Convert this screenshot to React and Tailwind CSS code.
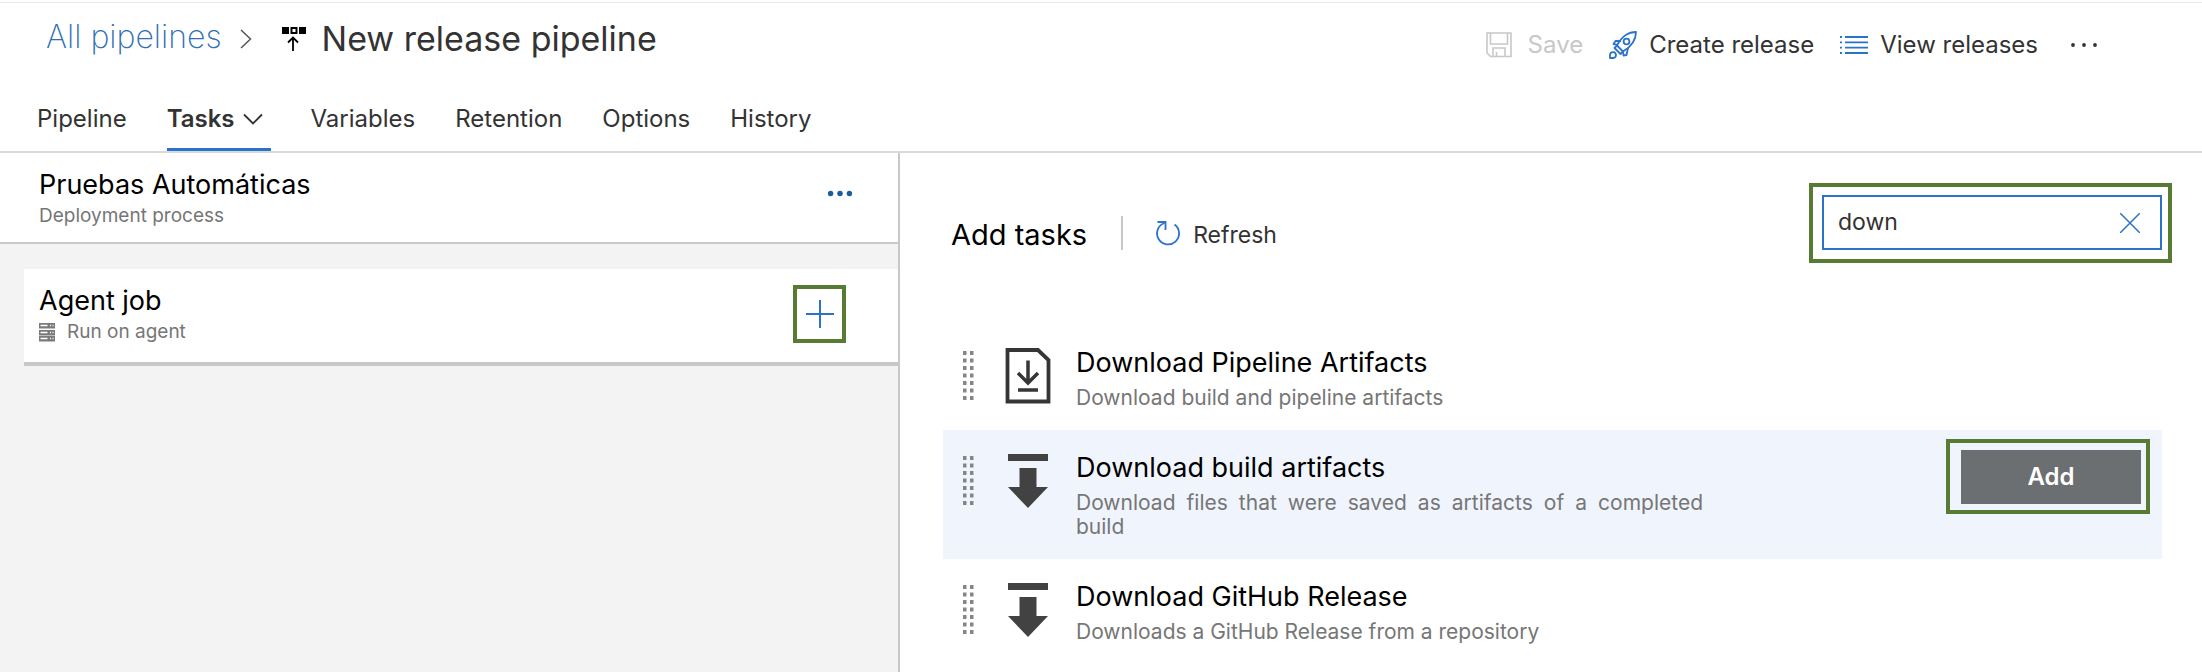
import React from 'react';

const blue = '#2b73c9';

function ChevronRight() {
  return (
    <svg className="h-5 w-3" viewBox="0 0 12 20" fill="none" stroke="#555" strokeWidth="1.5" aria-hidden="true">
      <path d="M1 1l9.500 9L1 19" />
    </svg>
  );
}

function PipelineIcon() {
  return (
    <svg className="h-6 w-6" viewBox="0 0 24 24" aria-hidden="true">
      <path d="M0 0h7v7H0zM17 0h7v7h-7z" fill="#000" />
      <path d="M9.500 1h5v5h-5z" fill="#fff" stroke="#000" strokeWidth="2" />
      <path d="M11 24V11M6 15.500l5-5 5 5" fill="none" stroke="#000" strokeWidth="1.800" />
    </svg>
  );
}

function SaveIcon() {
  return (
    <svg className="h-[26px] w-[26px]" viewBox="0 0 26 26" fill="none" stroke="#c8c8c8" strokeWidth="1.600" aria-hidden="true">
      <path d="M1 1h24v23.500H4.500L1 21z" />
      <path d="M4.500 1v11h17V1M7 24.500V16h12v8.500M10.500 24.500V20" />
    </svg>
  );
}

function RocketIcon() {
  return (
    <svg className="h-7 w-7" viewBox="0 0 28 28" fill="none" stroke={blue} strokeWidth="1.800" strokeLinejoin="round" aria-hidden="true">
      <path d="M27 1C19 1 13.500 4.500 8 14.500l6 6C22.500 15.500 27 10 27 1z" />
      <circle cx="17.500" cy="10.500" r="2.900" />
      <path d="M12 10H6.500L4.500 13l4 .8M19 17l-1.500 7-3 .5-.5-4" />
      <path d="M8 14.500l-2.500 2.500 6 6 2.500-2.500" />
      <path d="M1 27v-3.500a3 3 0 1 1 3.500 3.500z" />
    </svg>
  );
}

function ListIcon() {
  return (
    <svg className="h-5 w-7" viewBox="0 0 28 20" stroke={blue} strokeWidth="1.800" aria-hidden="true">
      <path d="M5 2h23M5 7.300h23M5 12.700h23M5 18h23M0 2h2M0 7.300h2M0 12.700h2M0 18h2" />
    </svg>
  );
}

function Dots({ className, r, color }) {
  return (
    <svg className={className} viewBox="0 0 28 8" fill={color} aria-hidden="true">
      <circle cx="3" cy="4" r={r} />
      <circle cx="14" cy="4" r={r} />
      <circle cx="25" cy="4" r={r} />
    </svg>
  );
}

function ServerIcon() {
  return (
    <svg className="h-[19px] w-4" viewBox="0 0 16 19" aria-hidden="true">
      {[0, 7, 13].map((y) => (
        <g key={y}>
          <path d={`M0 ${y}h16v5.500H0z`} fill="#7a7a7a" />
          <path d={`M1.500 ${y + 2.5}h7M11 ${y + 2.5}h1M13.500 ${y + 2.5}h1`} stroke="#fff" strokeWidth="1.300" />
        </g>
      ))}
    </svg>
  );
}

function RefreshIcon() {
  return (
    <svg className="h-[26px] w-[26px]" viewBox="0 0 26 26" fill="none" stroke={blue} strokeWidth="1.800" aria-hidden="true">
      <path d="M19.500 4.500A11 11 0 1 1 9.500 3" />
      <path d="M2.500 2h8v8" />
    </svg>
  );
}

function DragHandle() {
  return (
    <svg className="mt-[26px] h-[50px] w-[11px] shrink-0" viewBox="0 0 11 50" fill="#858585" aria-hidden="true">
      {[0, 1, 2, 3, 4, 5, 6].map((i) => (
        <path key={i} d={`M0 ${i * 7.5}h3.500v4h-3.500zM7 ${i * 7.5}h3.500v4h-3.500z`} />
      ))}
    </svg>
  );
}

function FileDownloadIcon() {
  return (
    <svg className="h-14 w-12" viewBox="0 0 48 56" fill="none" stroke="#363636" aria-hidden="true">
      <path d="M3.500 2h30.500l10.500 10v41.500h-41z" strokeWidth="3.800" />
      <path d="M24 12.500v22M14 25l10 10 10-10M14 42h20" strokeWidth="3.500" />
    </svg>
  );
}

function ArrowDownloadIcon() {
  return (
    <svg className="h-14 w-12" viewBox="0 0 48 56" fill="#424242" aria-hidden="true">
      <path d="M4 1h40v7H4zM15.500 15h17v19H44L24 55 4 34h11.500z" />
    </svg>
  );
}

const tabs = ['Variables', 'Retention', 'Options', 'History'];

const tasks = [
  { name: 'Download Pipeline Artifacts', text: 'Download build and pipeline artifacts', Icon: FileDownloadIcon },
  {
    name: 'Download build artifacts',
    text: 'Download files that were saved as artifacts of a completed build',
    Icon: ArrowDownloadIcon,
    selected: true,
  },
  { name: 'Download GitHub Release', text: 'Downloads a GitHub Release from a repository', Icon: ArrowDownloadIcon },
];

function Header() {
  return (
    <header className="border-b-2 border-[#d9d9d9] pt-0.5">
      <div className="flex h-[87px] items-start justify-between border-t border-[#e8e8e8] pr-[102px] pl-[46px]">
        <div className="flex h-[72px] items-center">
          <a href="#pipelines" className="pb-1 text-[32px] leading-10 font-extralight text-[#2f6fb5]">
            All pipelines
          </a>
          <span className="ml-[18px]"><ChevronRight /></span>
          <span className="ml-[30px]"><PipelineIcon /></span>
          <h1 className="ml-4 text-[34px] leading-10 text-[#333]">New release pipeline</h1>
        </div>
        <div className="flex h-[84px] items-center text-2xl text-[#333]">
          <button type="button" disabled className="flex items-center gap-4 text-[#c8c8c8]">
            <SaveIcon />
            Save
          </button>
          <button type="button" className="ml-[26px] flex items-center gap-3">
            <RocketIcon />
            Create release
          </button>
          <button type="button" className="ml-[26px] flex items-center gap-3">
            <ListIcon />
            View releases
          </button>
          <button type="button" aria-label="More actions" className="ml-[30px]">
            <Dots className="h-2 w-8" r="1.9" color="#333" />
          </button>
        </div>
      </div>
      <nav className="flex h-[62px] gap-10 pl-[37px] text-2xl leading-[60px] text-[#333]">
        <a href="#pipeline">Pipeline</a>
        <a href="#tasks" className="flex items-center gap-2 border-b-[3px] border-[#2b73c9] pr-2 font-semibold">
          Tasks
          <svg className="h-3 w-5" viewBox="0 0 20 12" fill="none" stroke="#333" strokeWidth="1.800" aria-hidden="true">
            <path d="M1 1.500l9 9 9-9" />
          </svg>
        </a>
        {tabs.map((tab) => (
          <a key={tab} href={`#${tab.toLowerCase()}`}>{tab}</a>
        ))}
      </nav>
    </header>
  );
}

function ProcessPanel() {
  return (
    <section className="w-[900px] shrink-0 border-r-2 border-[#c8c8c8] bg-[#f3f3f3]">
      <div className="flex h-[91px] justify-between border-b-2 border-[#c8c8c8] bg-white pt-3 pr-[46px] pl-[39px]">
        <div>
          <h2 className="text-[27px] leading-10 text-black">Pruebas Automáticas</h2>
          <p className="text-[19px] leading-[22px] text-[#767676]">Deployment process</p>
        </div>
        <button type="button" aria-label="More options" className="mt-5 h-4">
          <Dots className="h-[7px] w-6" r="3.2" color="#1f5c9e" />
        </button>
      </div>
      <div className="mt-[25px] ml-6 flex h-[97px] items-start justify-between border-b-4 border-[#c8c8c8] bg-white pr-[52px] pl-[15px]">
        <div className="pt-3">
          <h2 className="text-[27px] leading-10 text-black">Agent job</h2>
          <p className="flex items-center gap-3 text-[19px] leading-[22px] text-[#767676]">
            <ServerIcon />
            Run on agent
          </p>
        </div>
        <button
          type="button"
          aria-label="Add a task to Agent job"
          className="mt-4 flex h-[58px] w-[53px] items-center justify-center border-4 border-[#587b33]"
        >
          <svg className="h-7 w-7" viewBox="0 0 28 28" stroke={blue} strokeWidth="2" aria-hidden="true">
            <path d="M14 0v28M0 14h28" />
          </svg>
        </button>
      </div>
    </section>
  );
}

function TaskRow({ name, text, Icon, selected }) {
  return (
    <li className={selected ? 'flex bg-[#f0f5fd] pr-3 pb-[18px] pl-5' : 'flex pr-3 pb-[18px] pl-5'}>
      <DragHandle />
      <span className="mt-[23px] ml-[30px] shrink-0"><Icon /></span>
      <div className="ml-6 w-[627px] pt-[14px]">
        <h3 className="text-[27px] leading-[47px] text-black">{name}</h3>
        <p className="pb-0.5 text-justify text-[21px] leading-6 text-[#767676]">{text}</p>
      </div>
      {selected && (
        <div className="mt-[9px] ml-auto h-[75px] border-4 border-[#587b33] pt-[7px] pr-[5px] pl-[11px]">
          <button type="button" className="h-[54px] w-[180px] bg-[#6c6f71] text-2xl font-semibold text-white">
            Add
          </button>
        </div>
      )}
    </li>
  );
}

function TasksPanel() {
  return (
    <section className="min-w-0 flex-1 pr-10 pl-[43px]">
      <div className="flex h-[172px] items-start">
        <h2 className="mt-[62px] ml-2 text-[29px] leading-10 text-black">Add tasks</h2>
        <div className="mt-[63px] ml-[34px] h-[34px] w-0.5 bg-[#c8c8c8]" />
        <button type="button" className="mt-[62px] ml-8 flex items-center gap-3 text-[23px] leading-10 text-[#333]">
          <span className="pb-1"><RefreshIcon /></span>
          Refresh
        </button>
        <div className="mt-[30px] -mr-2.5 ml-auto border-4 border-[#587b33] pt-2 pr-1.5 pb-[9px] pl-[9px]">
          <div className="flex h-[55px] w-[340px] items-center border-2 border-[#2b73c9] pr-5 pl-3.5">
            <input
              type="text"
              aria-label="Search tasks"
              defaultValue="down"
              className="min-w-0 flex-1 text-[23px] text-[#333] outline-none"
            />
            <button type="button" aria-label="Clear search">
              <svg className="h-5 w-5" viewBox="0 0 20 20" stroke={blue} strokeWidth="1.500" aria-hidden="true">
                <path d="M0 0l20 20M20 0L0 20" />
              </svg>
            </button>
          </div>
        </div>
      </div>
      <ul>
        {tasks.map((task) => (
          <TaskRow key={task.name} {...task} />
        ))}
      </ul>
    </section>
  );
}

export default function App() {
  return (
    <div className="flex min-h-screen flex-col bg-white font-['Inter','Liberation_Sans',sans-serif]">
      <Header />
      <main className="flex flex-1">
        <ProcessPanel />
        <TasksPanel />
      </main>
    </div>
  );
}
